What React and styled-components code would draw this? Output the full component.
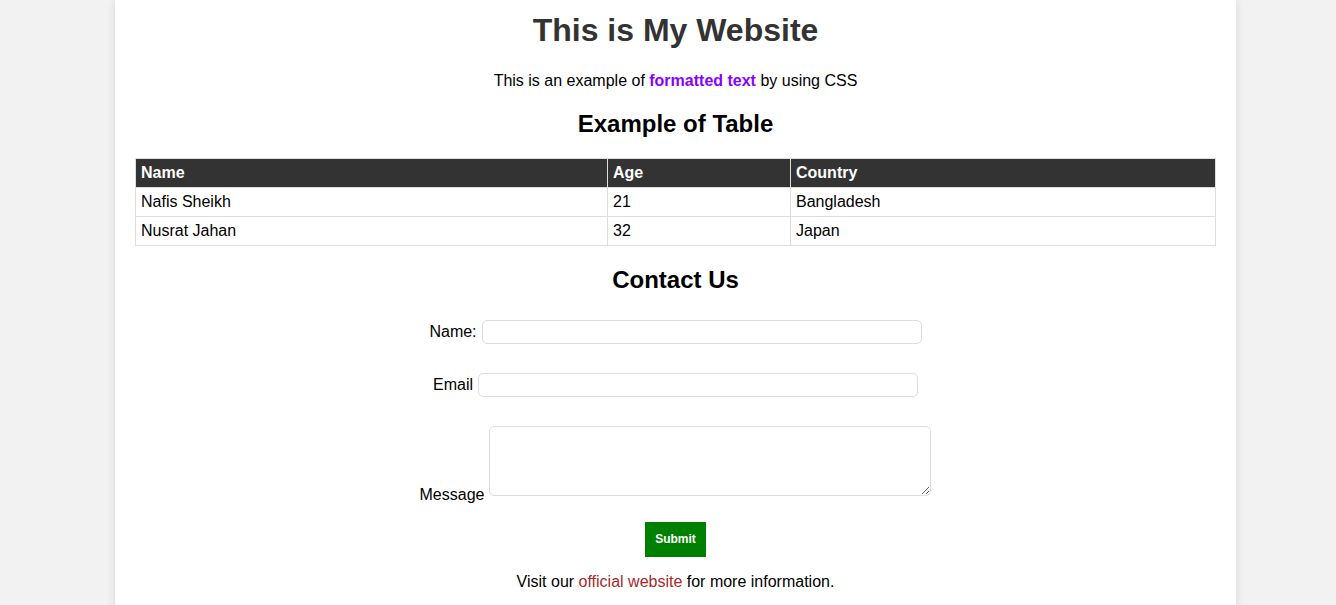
import styled, { createGlobalStyle } from 'styled-components';

const GlobalStyle = createGlobalStyle`
  body {
    margin: 0;
    padding-left: 15px;
    background: #f2f2f2;
    font-family: "Liberation Sans", Arial, sans-serif;
  }
`;

const Container = styled.div`
  width: 1081px;
  min-height: 100vh;
  margin: 0 auto;
  padding: 12px 20px 20px;
  background: #fff;
  box-shadow: 0 0 10px rgba(0, 0, 0, 0.1);
  text-align: center;
`;

const Title = styled.h1`
  margin: 0 0 23px;
  font-size: 32px;
  color: #333;
`;

const Intro = styled.p`
  margin: 0;
  font-size: 16px;
  color: #000;
`;

const Highlight = styled.strong`
  color: #8800ff;
`;

const SectionTitle = styled.h2`
  margin: ${(p) => p.$top}px 0 0;
  font-size: 24px;
  color: #000;
`;

const Table = styled.table`
  width: 100%;
  margin-top: 20px;
  border-collapse: collapse;
  text-align: left;
  font-size: 16px;
`;

const HeadCell = styled.th`
  width: ${(p) => p.$width || 'auto'};
  padding: 5px;
  border: 1px solid #ddd;
  background: #333;
  color: #fff;
  line-height: 18px;
`;

const Cell = styled.td`
  padding: 5px;
  border: 1px solid #ddd;
  line-height: 18px;
`;

const Form = styled.form`
  display: flex;
  flex-direction: column;
  align-items: center;
  margin-top: 26px;
`;

const FormRow = styled.div`
  display: flex;
  align-items: ${(p) => (p.$bottom ? 'flex-end' : 'center')};
  gap: 5px;
  margin-bottom: ${(p) => p.$gap}px;
  font-size: 16px;
`;

const Label = styled.label`
  line-height: 18px;
`;

const Input = styled.input`
  box-sizing: border-box;
  width: 440px;
  height: 24px;
  padding: 4px;
  border: 1px solid #ddd;
  border-radius: 5px;
`;

const TextArea = styled.textarea`
  box-sizing: border-box;
  width: 442px;
  height: 70px;
  margin-bottom: 8px;
  padding: 4px;
  border: 1px solid #ddd;
  border-radius: 5px;
`;

const SubmitButton = styled.button`
  padding: 10px;
  border: none;
  background: #008000;
  color: #fff;
  font-family: "Liberation Sans", Arial, sans-serif;
  font-size: 12px;
  font-weight: bold;
  line-height: 15px;
`;

const Footer = styled.p`
  margin: 16px 0 0;
  font-size: 16px;
`;

const Link = styled.a`
  color: #a52a2a;
  text-decoration: none;
`;

const people = [
  { name: 'Nafis Sheikh', age: 21, country: 'Bangladesh' },
  { name: 'Nusrat Jahan', age: 32, country: 'Japan' },
];

const App = () => (
  <>
    <GlobalStyle />
    <Container>
      <Title>This is My Website</Title>
      <Intro>
        This is an example of <Highlight>formatted text</Highlight> by using CSS
      </Intro>
      <SectionTitle $top={20}>Example of Table</SectionTitle>
      <Table>
        <thead>
          <tr>
            <HeadCell $width="461px">Name</HeadCell>
            <HeadCell $width="172px">Age</HeadCell>
            <HeadCell>Country</HeadCell>
          </tr>
        </thead>
        <tbody>
          {people.map(({ name, age, country }) => (
            <tr key={name}>
              <Cell>{name}</Cell>
              <Cell>{age}</Cell>
              <Cell>{country}</Cell>
            </tr>
          ))}
        </tbody>
      </Table>
      <SectionTitle $top={20}>Contact Us</SectionTitle>
      <Form onSubmit={(e) => e.preventDefault()}>
        <FormRow $gap={29}>
          <Label htmlFor="name">Name:</Label>
          <Input id="name" type="text" />
        </FormRow>
        <FormRow $gap={29}>
          <Label htmlFor="email">Email</Label>
          <Input id="email" type="email" />
        </FormRow>
        <FormRow $gap={18} $bottom>
          <Label htmlFor="message">Message</Label>
          <TextArea id="message" />
        </FormRow>
        <SubmitButton type="submit">Submit</SubmitButton>
      </Form>
      <Footer>
        Visit our <Link href="#">official website</Link> for more information.
      </Footer>
    </Container>
  </>
);

export default App;
